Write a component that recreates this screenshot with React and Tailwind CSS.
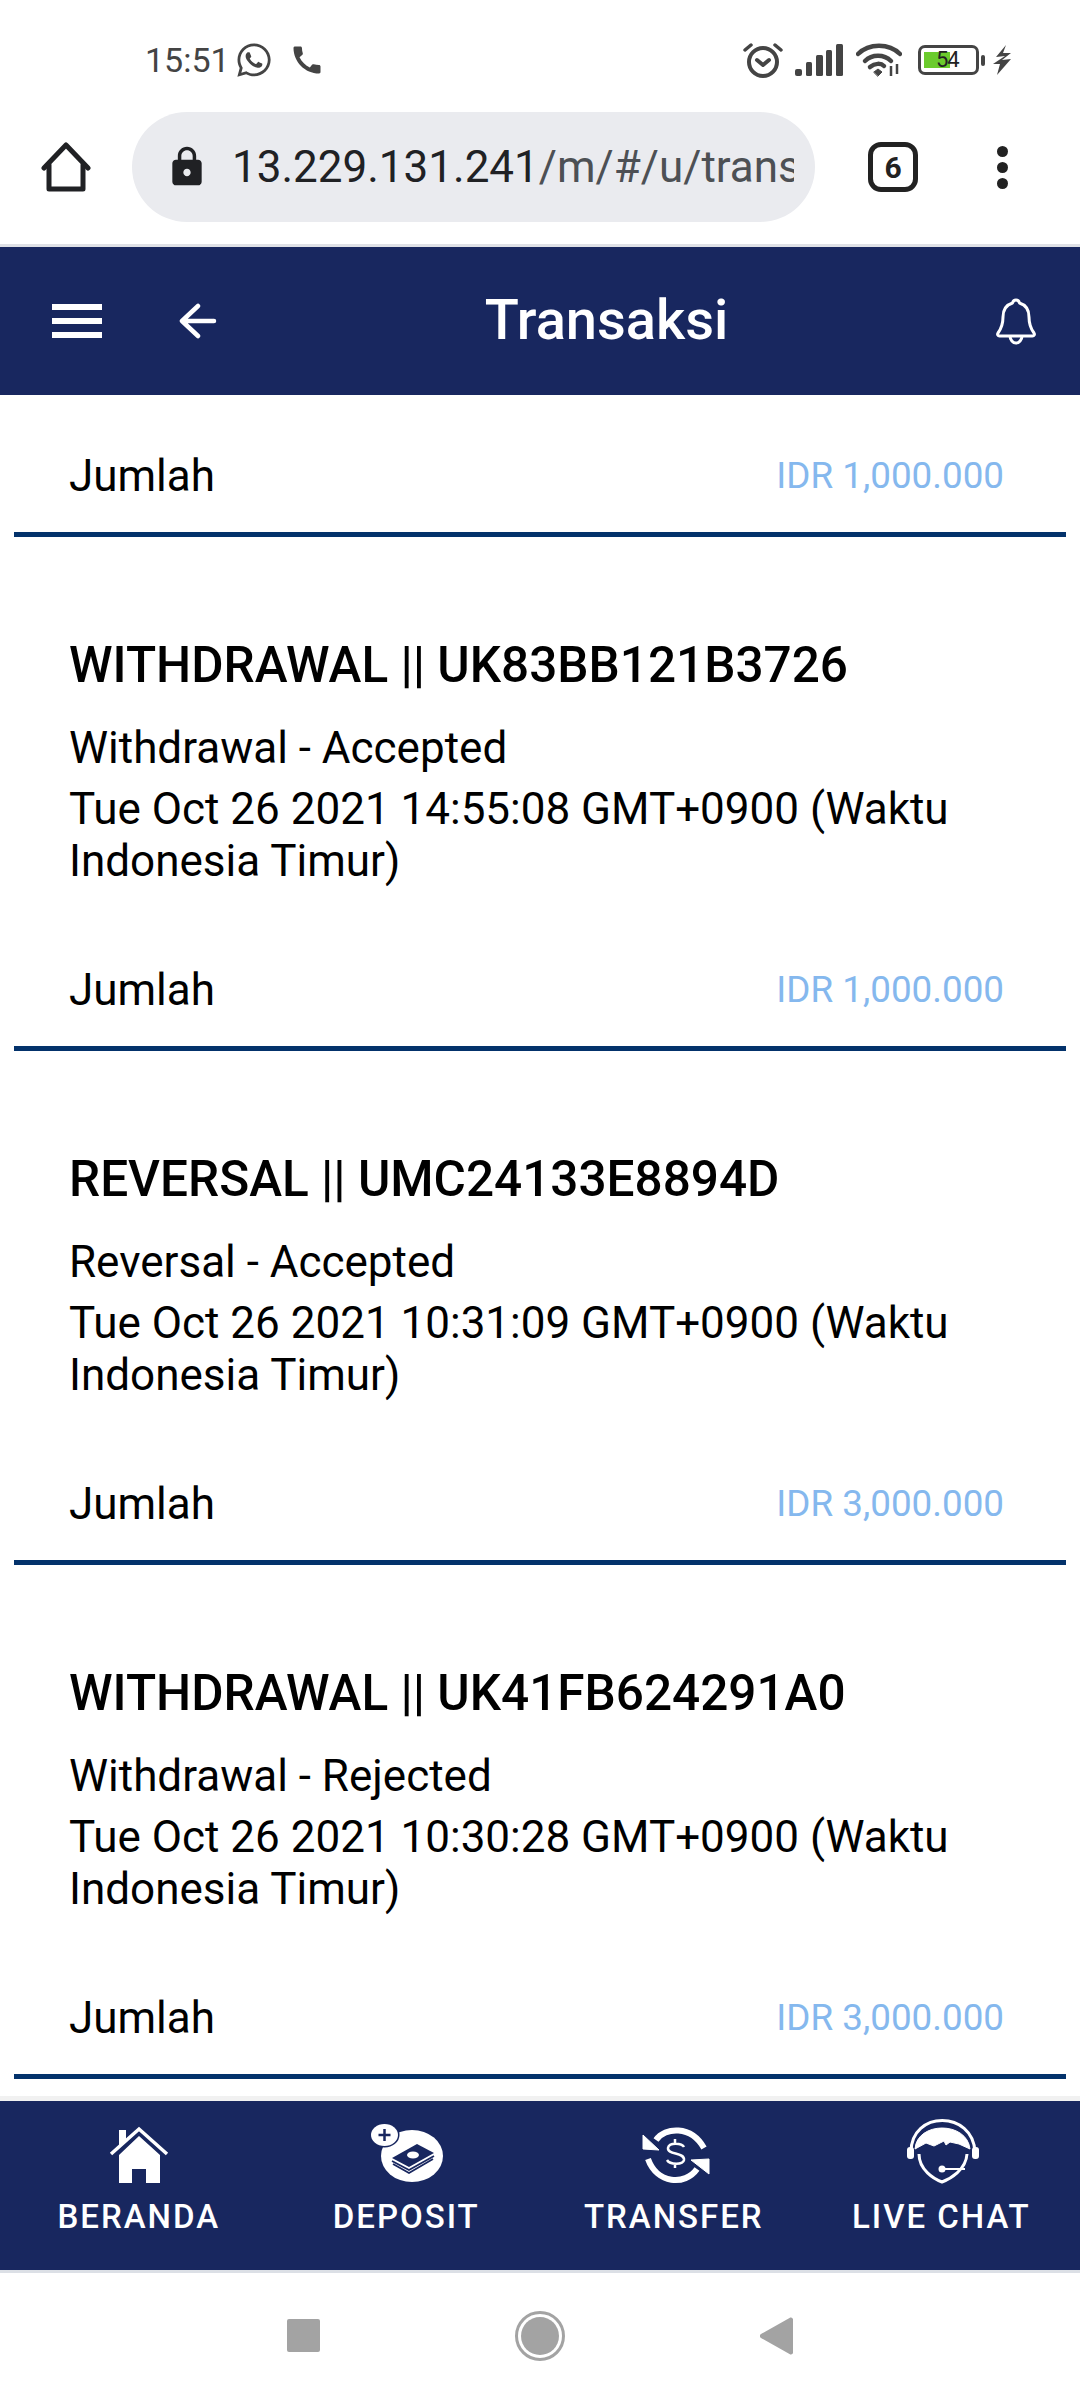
import React from "react";
import { FaWhatsapp } from "react-icons/fa";
import { MdCall, MdLock } from "react-icons/md";

const rows = [
  { title: "WITHDRAWAL || UK83BB121B3726", status: "Withdrawal - Accepted", date: "Tue Oct 26 2021 14:55:08 GMT+0900 (Waktu Indonesia Timur)", amount: "IDR 1,000.000" },
  { title: "REVERSAL || UMC24133E8894D", status: "Reversal - Accepted", date: "Tue Oct 26 2021 10:31:09 GMT+0900 (Waktu Indonesia Timur)", amount: "IDR 3,000.000" },
  { title: "WITHDRAWAL || UK41FB624291A0", status: "Withdrawal - Rejected", date: "Tue Oct 26 2021 10:30:28 GMT+0900 (Waktu Indonesia Timur)", amount: "IDR 3,000.000" },
];

const Amount = ({ value }) => (
  <>
    <div className="flex justify-between items-center pl-[69px] pr-[76px] text-[44px] leading-[52px] text-black">
      <span>Jumlah</span>
      <span className="text-[36.800px] text-[#85b8ee]">{value}</span>
    </div>
    <div className="mt-[30px] mx-[14px] h-[5px] bg-[#03326b]" />
  </>
);

const Alarm = () => (
  <svg width="40" height="36" viewBox="0 0 40 36" fill="none" stroke="#444" strokeWidth="4" strokeLinecap="round" strokeLinejoin="round">
    <circle cx="20" cy="20" r="14" />
    <path d="M14 18l6 5 6-5" />
    <path d="M2 8l6-5M38 8l-6-5" strokeWidth="3.5" />
  </svg>
);

const Signal = () => (
  <svg width="48" height="32" viewBox="0 0 48 32" fill="#444">
    <rect x="0" y="25" width="7" height="7" rx="2" />
    <rect x="11" y="18" width="6" height="14" rx="1.5" />
    <rect x="21" y="11" width="7" height="21" rx="1.5" />
    <rect x="31" y="6" width="6" height="26" rx="1.5" />
    <rect x="41" y="0" width="7" height="32" rx="1.5" />
  </svg>
);

const Wifi = () => (
  <svg width="46" height="34" viewBox="0 0 46 34" fill="none" stroke="#444" strokeWidth="4.500" strokeLinecap="round">
    <path d="M2 11C13 0 33 0 44 11" />
    <path d="M9 18C16 11 28 11 35 18" />
    <path d="M14 24C19 20 25 20 28 23" />
    <path d="M18 29l4-3 4 3-4 4z" fill="#444" strokeWidth="1" />
    <path d="M35 23v10M41 21v10" strokeWidth="2.5" strokeLinecap="butt" />
  </svg>
);

const Battery = () => (
  <div className="flex items-center gap-[2px]">
    <div className="relative w-[61px] h-[30px] border-[3px] border-[#444] rounded-[7px]">
      <div className="ml-[3px] mt-[4px] w-[26px] h-[16px] bg-[#6bcb2d]" />
      <span className="absolute left-[15px] top-[-1px] text-[22px] leading-[26px] tracking-[-1px] text-[#222]">54</span>
    </div>
    <div className="w-[4px] h-[11px] rounded-full bg-[#444]" />
  </div>
);

const Bolt = () => (
  <svg width="18" height="30" viewBox="0 0 18 30" fill="#444">
    <path d="M13 0L3 12l9-1-12 8 7 0-3 11L18 14l-9 1 9-7h-8z" />
  </svg>
);

const ToolbarHome = () => (
  <svg width="50" height="50" viewBox="0 0 50 50" fill="none" stroke="#202124" strokeWidth="5" strokeLinejoin="round" strokeLinecap="round">
    <path d="M3 26L25 3l22 23" />
    <path d="M8 23v24h34V23" />
  </svg>
);

const Bell = () => (
  <svg width="40" height="48" viewBox="0 0 40 48" fill="none" stroke="#fff" strokeWidth="3" strokeLinejoin="round">
    <path d="M20 3c2 0 3 1 3.500 3C30 8 33 13 33 20c0 8 2 12 5 16 1 1.500 0 3-1.500 3h-33C2 39 1 37.500 2 36c3-4 5-8 5-16 0-7 3-12 9.500-14C17 4 18 3 20 3z" />
    <path d="M14 39c0 4 3 7 6 7s6-3 6-7" />
  </svg>
);

const NavHome = () => (
  <svg width="90" height="78" viewBox="0 0 90 78" fill="#fff">
    <path d="M25 18h7v11l-7 7z" />
    <path d="M17 42L45 17l28 25" fill="none" stroke="#fff" strokeWidth="3.500" />
    <path d="M45 24L66 43v28H52V57H38v14H25V43z" />
  </svg>
);

const NavDeposit = () => (
  <svg width="90" height="78" viewBox="0 0 90 78">
    <ellipse cx="51" cy="44" rx="31" ry="26" fill="#fff" />
    <ellipse cx="23.500" cy="23" rx="15" ry="12.500" fill="#18275f" />
    <ellipse cx="23.500" cy="23" rx="13.500" ry="11" fill="#fff" />
    <path d="M23.500 17v12M17.500 23h12" stroke="#18275f" strokeWidth="2.500" />
    <path d="M31 46l25-14 17 9-25 14z" fill="#18275f" />
    <ellipse cx="52" cy="43" rx="6" ry="3.500" fill="#fff" />
    <path d="M31 49l17 9 25-14M32 52l16 9 24-14" fill="none" stroke="#18275f" strokeWidth="1.800" />
  </svg>
);

const NavTransfer = () => (
  <svg width="90" height="78" viewBox="0 0 90 78" fill="none" stroke="#fff">
    <path d="M27 28C36 15 62 13 75 36" strokeWidth="6" />
    <path d="M14 23v14l16 1z" fill="#fff" strokeWidth="1" strokeLinejoin="round" />
    <path d="M19 47C28 72 56 74 68 57" strokeWidth="6" />
    <path d="M80 47v15l-18-14z" fill="#fff" strokeWidth="1" strokeLinejoin="round" />
    <path d="M55 35c-2-4-15-5-16 1-1 7 17 4 16 12-1 5-14 5-17 0M46 27v4M46 52v4" strokeWidth="2.500" />
  </svg>
);

const NavChat = () => (
  <svg width="90" height="78" viewBox="0 0 90 78" fill="none" stroke="#fff" strokeWidth="3">
    <path d="M15 40C15 -2 77 -2 79 40" />
    <rect x="11" y="35" width="7" height="12" rx="3" fill="#fff" stroke="none" />
    <rect x="76" y="35" width="7" height="12" rx="3" fill="#fff" stroke="none" />
    <path d="M19 37C21 9 71 9 74 37L63 32 54 30 50 33 48 29 38 34 30 31z" fill="#fff" strokeWidth="1" />
    <path d="M23 42c0 16 15 25 23 28 8-3 24-12 25-28" />
    <circle cx="46" cy="57" r="3.500" fill="#fff" stroke="none" />
    <path d="M46 57h23" strokeWidth="2" />
  </svg>
);

const navItems = [
  { label: "BERANDA", Icon: NavHome },
  { label: "DEPOSIT", Icon: NavDeposit },
  { label: "TRANSFER", Icon: NavTransfer },
  { label: "LIVE CHAT", Icon: NavChat },
];

export default function App() {
  return (
    <div className="w-[1080px] h-[2400px] flex flex-col overflow-hidden bg-white font-['Roboto',sans-serif]">
      {/* status bar */}
      <div className="h-[112px] pt-[8px] pl-[145px] pr-[69px] flex items-center text-[#444]">
        <span className="text-[34px]">15:51</span>
        <FaWhatsapp className="ml-[5px] text-[38px]" />
        <MdCall className="ml-[16px] text-[36px]" />
        <div className="ml-auto flex items-center">
          <Alarm />
          <div className="ml-[12px]"><Signal /></div>
          <div className="ml-[13px]"><Wifi /></div>
          <div className="ml-[16px]"><Battery /></div>
          <div className="ml-[8px]"><Bolt /></div>
        </div>
      </div>

      {/* browser toolbar */}
      <div className="h-[132px] pb-[22px] flex items-center">
        <div className="ml-[41px]"><ToolbarHome /></div>
        <div className="ml-[41px] w-[683px] h-[110px] rounded-full bg-[#eaebef] flex items-center pl-[33px] pr-[21px]">
          <MdLock className="text-[#202124] text-[44px] shrink-0" />
          <div className="ml-[23px] overflow-hidden whitespace-nowrap text-[44px] text-[#202124]">
            13.229.131.241<span className="text-[#4d5054]">/m/#/u/transaksi</span>
          </div>
        </div>
        <div className="ml-[53px] w-[50px] h-[50px] border-[5px] border-[#222] rounded-[13px] flex items-center justify-center text-[30px] font-bold text-[#222]">6</div>
        <div className="ml-[79px] flex flex-col gap-[5px]">
          <div className="w-[11px] h-[11px] rounded-full bg-[#222]" />
          <div className="w-[11px] h-[11px] rounded-full bg-[#222]" />
          <div className="w-[11px] h-[11px] rounded-full bg-[#222]" />
        </div>
      </div>

      {/* page header */}
      <div className="h-[151px] border-t-[3px] border-[#dfe1e6] bg-[#18275f] flex items-center text-white">
        <div className="ml-[52px] w-[50px] flex flex-col gap-[8px]">
          <div className="h-[6px] bg-white" />
          <div className="h-[6px] bg-white" />
          <div className="h-[6px] bg-white" />
        </div>
        <svg className="ml-[77px]" width="38" height="36" viewBox="0 0 38 36" fill="none" stroke="#fff" strokeWidth="4.500" strokeLinecap="round" strokeLinejoin="round">
          <path d="M19 3L3 18l16 15M3 18h32" />
        </svg>
        <div className="flex-1 text-center text-[56px] leading-[60px] font-medium mx-[44px] pb-[2px]">Transaksi</div>
        <div className="mr-[44px]"><Bell /></div>
      </div>

      {/* list */}
      <div className="flex-1 overflow-hidden pt-[55px]">
        <Amount value="IDR 1,000.000" />
        {rows.map((r) => (
          <div key={r.title} className="pt-[98px]">
            <div className="px-[69px]">
              <div className="text-[49.500px] leading-[60px] font-medium text-black">{r.title}</div>
              <div className="mt-[27px] text-[44px] leading-[52px] text-black">{r.status}</div>
              <div className="mt-[9px] text-[44px] leading-[52px] text-black">{r.date}</div>
            </div>
            <div className="mt-[77px]">
              <Amount value={r.amount} />
            </div>
          </div>
        ))}
      </div>

      {/* bottom nav */}
      <div className="h-[177px] border-t-[5px] border-b-[3px] border-t-[#f1f1f1] border-b-[#dce0e6] bg-[#18275f] px-[5px] pt-[11px] grid grid-cols-4 shrink-0">
        {navItems.map(({ label, Icon }) => (
          <div key={label} className="flex flex-col items-center text-white">
            <Icon />
            <div className="mt-[7px] text-[33px] leading-[40px] font-medium tracking-[2px]">{label}</div>
          </div>
        ))}
      </div>

      {/* android nav */}
      <div className="h-[127px] shrink-0 flex items-center justify-center pb-[2px] gap-[195px]">
        <div className="w-[33px] h-[33px] rounded-[2px] bg-[#a3a3a3]" />
        <div className="w-[50px] h-[50px] rounded-full border-[3px] border-[#a3a3a3] p-[3px]">
          <div className="w-full h-full rounded-full bg-[#a3a3a3]" />
        </div>
        <svg width="33" height="38" viewBox="0 0 33 38" fill="#a3a3a3">
          <path d="M31 0.500c1 0 2 1 2 2v33c0 1-1 2-2 2-0.500 0-1 0-1.500-0.500L1 21c-1.500-1-1.500-3 0-4L29.500 1c0.500-0.500 1-0.500 1.500-0.500z" />
        </svg>
      </div>
    </div>
  );
}
